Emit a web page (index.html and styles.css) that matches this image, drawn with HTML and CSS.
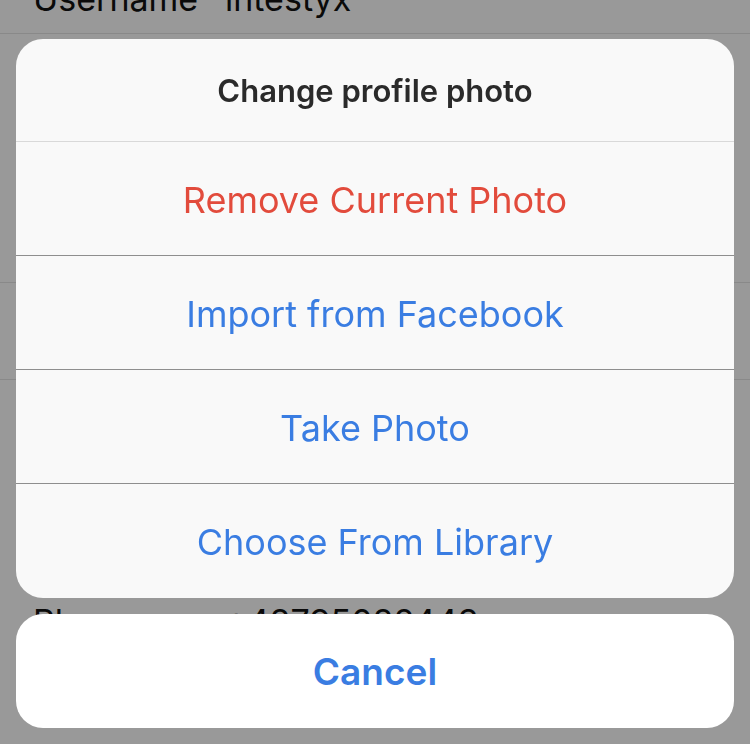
FILE: index.html
```html
<!DOCTYPE html>
<html lang="en">
<head>
    <meta charset="UTF-8">
    <meta name="viewport" content="width=device-width, initial-scale=1.0">
    <title>Edit profile</title>
    <link rel="stylesheet" href="styles.css">
</head>
<body>
    <!-- page behind the sheet -->
    <div class="page">
        <div class="row row-user">
            <span class="label">Username</span>
            <span class="value">intestyx</span>
        </div>
        <div class="row row-bio"></div>
        <div class="row row-web"></div>
        <div class="row row-phone">
            <span class="label">Phone</span>
            <span class="value">+48795082443</span>
        </div>
    </div>

    <!-- action sheet -->
    <div class="overlay">
        <div class="sheet">
            <div class="group">
                <div class="title">Change profile photo</div>
                <a class="action danger" href="javascript:;">Remove Current Photo</a>
                <a class="action" href="javascript:;">Import from Facebook</a>
                <a class="action" href="javascript:;">Take Photo</a>
                <a class="action" href="javascript:;">Choose From Library</a>
            </div>
            <a class="cancel" href="javascript:;">Cancel</a>
        </div>
    </div>
</body>
</html>
```

FILE: styles.css
```css
*{
    margin: 0;
    padding: 0;
    box-sizing: border-box;
}
html,body{
    width: 750px;
    height: 744px;
    overflow: hidden;
}
body{
    font-family: Inter, "Liberation Sans", Arial, sans-serif;
    background-color: #fff;
}

/* page behind */
.page{
    margin-top: -31px;
}
.row{
    display: flex;
    align-items: flex-end;
    border-bottom: 1px solid #e4e4e4;
    font-size: 34px;
    line-height: 44px;
    color: #111;
}
.row .label{
    flex: 0 0 225px;
    padding-left: 33px;
}
.row-user{
    height: 65px;
    padding-bottom: 12px;
}
.row-bio{
    height: 249px;
}
.row-web{
    height: 97px;
}
.row-phone{
    height: 300px;
    align-items: flex-start;
    padding-top: 220px;
    border-bottom: none;
}

/* dimmed layer */
.overlay{
    position: fixed;
    left: 0;
    top: 0;
    width: 750px;
    height: 744px;
    background-color: rgba(0, 0, 0, 0.4);
    display: flex;
    flex-direction: column;
    justify-content: flex-end;
    padding: 0 16px 16px;
}
.sheet{
    display: flex;
    flex-direction: column;
    gap: 16px;
}
.group{
    background-color: #f9f9f9;
    border-radius: 27px;
    overflow: hidden;
}
.title{
    height: 103px;
    display: flex;
    align-items: center;
    justify-content: center;
    font-size: 31px;
    font-weight: 600;
    color: #2a2a2a;
    border-bottom: 1px solid #d9d9d9;
}
.action{
    height: 114px;
    padding-top: 2px;
    display: flex;
    align-items: center;
    justify-content: center;
    font-size: 36px;
    color: #3a7de2;
    text-decoration: none;
    border-bottom: 1px solid #8e8e8e;
}
.action:last-child{
    border-bottom: none;
}
.action.danger{
    color: #e24b3c;
}
.cancel{
    height: 114px;
    display: flex;
    align-items: center;
    justify-content: center;
    background-color: #fff;
    border-radius: 27px;
    font-size: 37px;
    font-weight: 600;
    color: #3a7de2;
    text-decoration: none;
}
```
